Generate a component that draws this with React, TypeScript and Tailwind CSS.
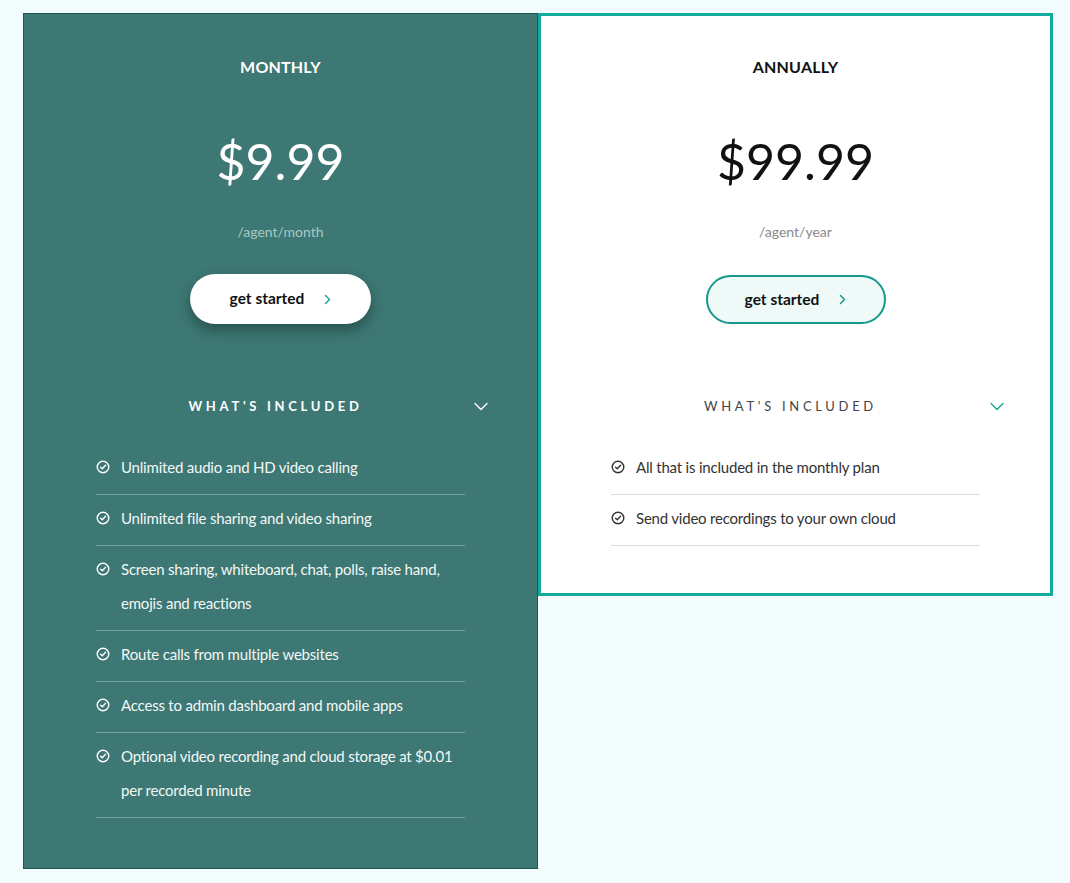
import React from "react";

const CheckCircle = ({ className }: { className?: string }) => (
  <svg className={className} width="14" height="14" viewBox="0 0 16 16" fill="none" stroke="currentColor" strokeWidth="1.6" strokeLinecap="round" strokeLinejoin="round">
    <circle cx="8" cy="8" r="6.6" />
    <path d="M5.2 8.2 L7.2 10.1 L10.9 6.1" />
  </svg>
);

const ChevronDown = ({ className }: { className?: string }) => (
  <svg className={className} width="14" height="9" viewBox="0 0 14 9" fill="none" stroke="currentColor" strokeWidth="1.4" strokeLinecap="round" strokeLinejoin="round">
    <path d="M1 1.5 L7 7.5 L13 1.5" />
  </svg>
);

const ChevronRight = ({ className }: { className?: string }) => (
  <svg className={className} width="7" height="11" viewBox="0 0 7 11" fill="none" stroke="currentColor" strokeWidth="1.5" strokeLinecap="round" strokeLinejoin="round">
    <path d="M1.5 1.5 L5.5 5.5 L1.5 9.5" />
  </svg>
);

const monthly = [
  "Unlimited audio and HD video calling",
  "Unlimited file sharing and video sharing",
  "Screen sharing, whiteboard, chat, polls, raise hand, emojis and reactions",
  "Route calls from multiple websites",
  "Access to admin dashboard and mobile apps",
  "Optional video recording and cloud storage at $0.01 per recorded minute",
];

const annual = [
  "All that is included in the monthly plan",
  "Send video recordings to your own cloud",
];

export default function App() {
  return (
    <div
      className="min-h-[883px] w-[1070px] bg-[#f3fcfd] pl-[23px] pt-[13px]"
      style={{ fontFamily: "'Lato', 'Liberation Sans', sans-serif" }}
    >
      <div className="flex items-start">
        {/* Monthly */}
        <div className="flex h-[856px] w-[515px] flex-col items-center border border-[#1d5652] bg-[#3d7874] pt-[42px]">
          <div className="text-[16px] font-bold leading-[22px] tracking-[0.2px] text-white">MONTHLY</div>
          <div className="mt-[53px] text-[50px] font-normal leading-[60px] text-white">$9.99</div>
          <div className="mt-[31px] text-[14px] leading-[20px] text-[#a9c8c5]">/agent/month</div>
          <button className="mt-[32px] flex h-[50px] w-[181px] items-center justify-center gap-[20px] rounded-full bg-white shadow-[0_6px_14px_rgba(0,0,0,0.35)]">
            <span className="text-[15.5px] font-bold text-[#111]">get started</span>
            <ChevronRight className="text-[#1aa597]" />
          </button>
          <div className="relative mt-[72px] w-full">
            <div className="pr-[10px] text-center text-[13px] font-bold leading-[20px] tracking-[3.7px] text-white">WHAT'S INCLUDED</div>
            <ChevronDown className="absolute right-[49px] top-[6px] text-white" />
          </div>
          <div className="mt-[28px] w-[369px]">
            {monthly.map((t) => (
              <div key={t} className="flex items-start border-b border-[#70a29e] pb-[10px] pt-[6px]">
                <CheckCircle className="mt-[10px] shrink-0 text-white" />
                <span className="ml-[11px] text-[15px] leading-[34px] tracking-[-0.2px] text-[#f3f7f6]">{t}</span>
              </div>
            ))}
          </div>
        </div>

        {/* Annually */}
        <div className="flex w-[515px] flex-col items-center border-[3px] border-[#14ab9f] bg-white pb-[47px] pt-[40px]">
          <div className="text-[16px] font-bold leading-[22px] tracking-[0.2px] text-[#111]">ANNUALLY</div>
          <div className="mt-[53px] text-[50px] font-normal leading-[60px] text-[#111]">$99.99</div>
          <div className="mt-[31px] text-[14px] leading-[20px] text-[#8a8a8a]">/agent/year</div>
          <button className="mt-[33px] flex h-[49px] w-[180px] items-center justify-center gap-[20px] rounded-full border-2 border-[#15988c] bg-[#effaf8]">
            <span className="text-[15.5px] font-bold text-[#111]">get started</span>
            <ChevronRight className="text-[#15988c]" />
          </button>
          <div className="relative mt-[72px] w-full">
            <div className="pr-[10px] text-center text-[13px] font-normal leading-[20px] tracking-[3.7px] text-[#444]">WHAT'S INCLUDED</div>
            <ChevronDown className="absolute right-[46px] top-[6px] text-[#1aa597]" />
          </div>
          <div className="mt-[28px] w-[369px]">
            {annual.map((t) => (
              <div key={t} className="flex items-start border-b border-[#dddddd] pb-[10px] pt-[6px]">
                <CheckCircle className="mt-[10px] shrink-0 text-[#333]" />
                <span className="ml-[11px] text-[15px] leading-[34px] tracking-[-0.2px] text-[#333]">{t}</span>
              </div>
            ))}
          </div>
        </div>
      </div>
    </div>
  );
}
